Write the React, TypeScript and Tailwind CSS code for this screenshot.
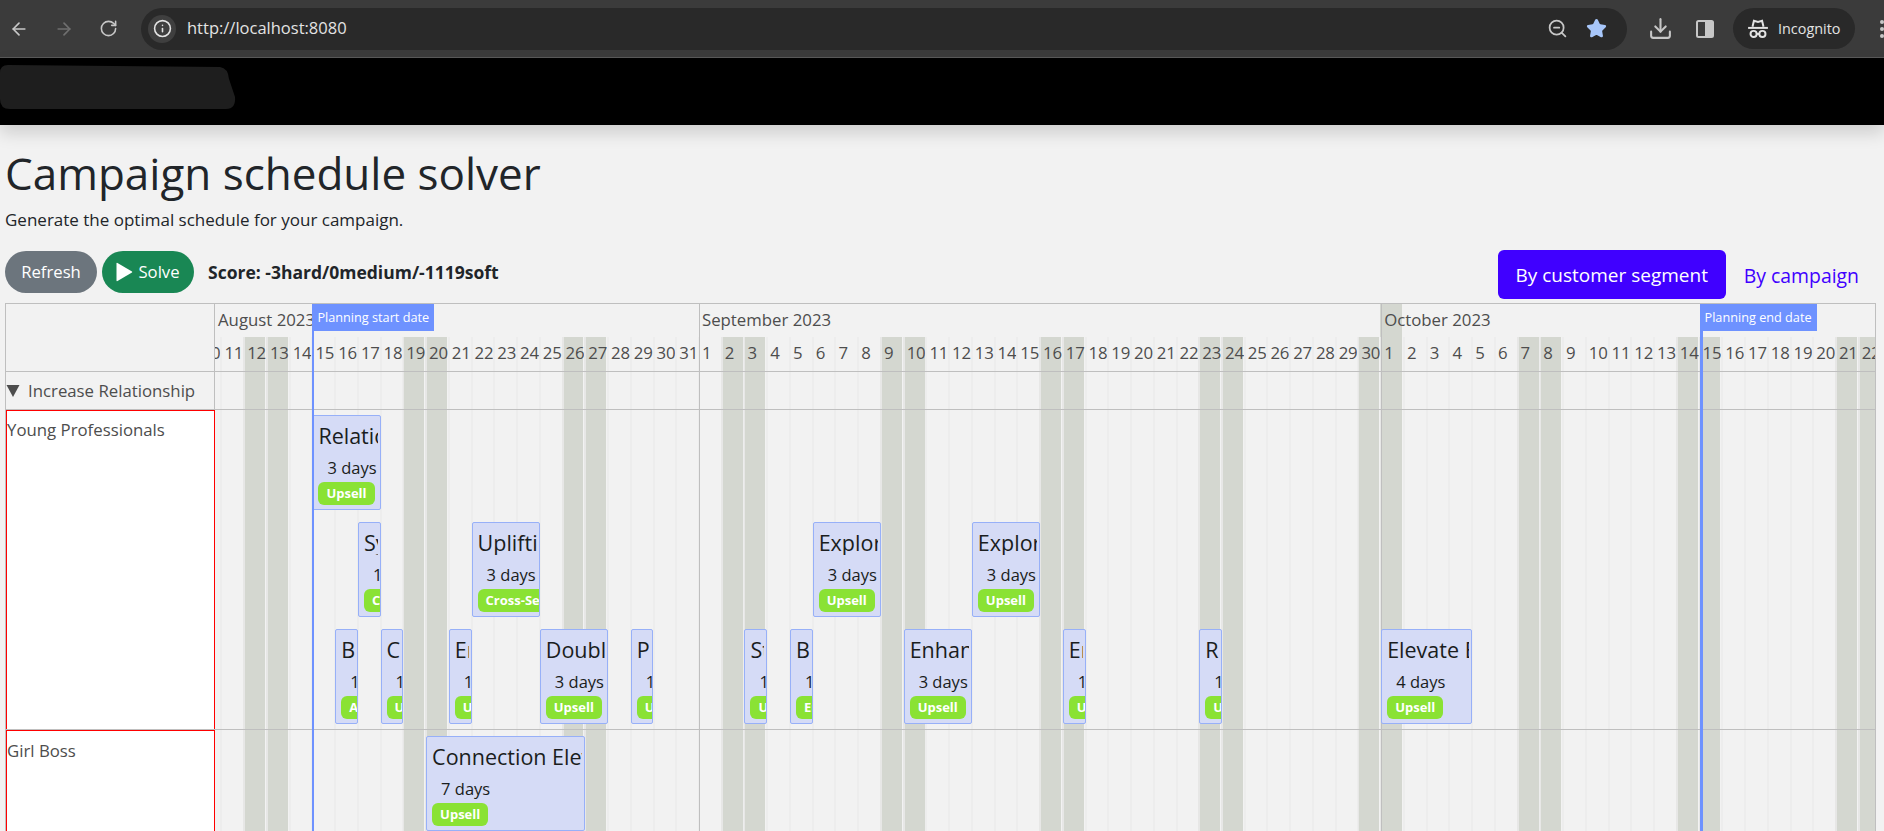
import React from 'react';
import { ArrowLeft, ArrowRight, Download, Info, RotateCw, Star, ZoomOut } from 'lucide-react';

const DAY_WIDTH = 22.74;
// x of Aug 10 inside the timeline canvas
const ORIGIN = -16.3;

type Month = 'Aug' | 'Sep' | 'Oct';

const monthOffset: Record<Month, number> = { Aug: -10, Sep: 21, Oct: 51 };

function dayIndex(month: Month, day: number) {
  return monthOffset[month] + day;
}

function dayX(index: number) {
  return ORIGIN + index * DAY_WIDTH;
}

// Aug 10 to Oct 22
const days: number[] = [
  ...Array.from({ length: 22 }, (_, i) => 10 + i),
  ...Array.from({ length: 30 }, (_, i) => 1 + i),
  ...Array.from({ length: 22 }, (_, i) => 1 + i),
];

interface Campaign {
  title: string;
  month: Month;
  day: number;
  length: number;
  tag: string;
  lane: number;
}

const youngProfessionals: Campaign[] = [
  { title: 'Relationship', month: 'Aug', day: 15, length: 3, tag: 'Upsell', lane: 0 },
  { title: 'Synergy', month: 'Aug', day: 17, length: 1, tag: 'Cross-Sell', lane: 1 },
  { title: 'Uplifting', month: 'Aug', day: 22, length: 3, tag: 'Cross-Sell', lane: 1 },
  { title: 'Explore', month: 'Sep', day: 6, length: 3, tag: 'Upsell', lane: 1 },
  { title: 'Explore', month: 'Sep', day: 13, length: 3, tag: 'Upsell', lane: 1 },
  { title: 'Boost', month: 'Aug', day: 16, length: 1, tag: 'Add-on', lane: 2 },
  { title: 'Connect', month: 'Aug', day: 18, length: 1, tag: 'Upsell', lane: 2 },
  { title: 'Engage', month: 'Aug', day: 21, length: 1, tag: 'Upsell', lane: 2 },
  { title: 'Double', month: 'Aug', day: 25, length: 3, tag: 'Upsell', lane: 2 },
  { title: 'Personal', month: 'Aug', day: 29, length: 1, tag: 'Upsell', lane: 2 },
  { title: 'Strengthen', month: 'Sep', day: 3, length: 1, tag: 'Upsell', lane: 2 },
  { title: 'Build', month: 'Sep', day: 5, length: 1, tag: 'Engage', lane: 2 },
  { title: 'Enhance', month: 'Sep', day: 10, length: 3, tag: 'Upsell', lane: 2 },
  { title: 'Engage', month: 'Sep', day: 17, length: 1, tag: 'Upsell', lane: 2 },
  { title: 'Reinforce', month: 'Sep', day: 23, length: 1, tag: 'Upsell', lane: 2 },
  { title: 'Elevate Bond', month: 'Oct', day: 1, length: 4, tag: 'Upsell', lane: 2 },
];

const girlBoss: Campaign[] = [
  { title: 'Connection Elevate', month: 'Aug', day: 20, length: 7, tag: 'Upsell', lane: 0 },
];

function CampaignItem({ item, top }: { item: Campaign; top: number }) {
  const index = dayIndex(item.month, item.day);
  return (
    <div
      className="absolute h-[95px] overflow-hidden rounded-[2px] border border-[#97b0f8] bg-[#d5dbf6] pl-[5px] pt-[8px] whitespace-nowrap text-[#1a1d20]"
      style={{ left: dayX(index), width: item.length * DAY_WIDTH, top }}
    >
      <div className="mr-[2px] h-[24px] overflow-hidden text-[21.5px] leading-[24px] font-medium">{item.title}</div>
      <div className="mt-[8px] h-[24px] pl-[9px] text-[16.5px] leading-[24px]">
        {item.length} {item.length === 1 ? 'day' : 'days'}
      </div>
      <span className="mt-0 inline-block h-[23px] rounded-[6px] bg-[#8ae234] px-[8px] text-[13px] leading-[23px] font-bold text-white">
        {item.tag}
      </span>
    </div>
  );
}

function TimelineBackground() {
  return (
    <div className="absolute top-0 right-0 bottom-0 left-[209px] overflow-hidden">
      {days.map((day, i) => {
        const weekend = (i + 5) % 7 === 0 || (i + 4) % 7 === 0;
        return (
          <React.Fragment key={i}>
            {weekend && (
              <div
                className={`absolute bottom-0 w-[21.7px] bg-[#d4d7d0] ${i === 52 ? 'top-0' : 'top-[33px]'}`}
                style={{ left: dayX(i) - 0.8 }}
              />
            )}
            <div
              className="absolute top-[33px] bottom-0 w-[2px] bg-[#ebebeb] opacity-80"
              style={{ left: dayX(i) - 1 }}
            />
            <div
              className="absolute top-[37px] text-[16.8px] leading-[24px] tracking-[-0.2px] text-[#4d4d4d]"
              style={{ left: dayX(i) + 3 }}
            >
              {day}
            </div>
          </React.Fragment>
        );
      })}
      {[
        { label: 'August 2023', x: 3 },
        { label: 'September 2023', x: dayX(22) + 3 },
        { label: 'October 2023', x: dayX(52) + 3 },
      ].map((m) => (
        <div
          key={m.label}
          className="absolute top-[4px] text-[16.8px] leading-[24px] whitespace-nowrap text-[#4d4d4d]"
          style={{ left: m.x }}
        >
          {m.label}
        </div>
      ))}
      {[22, 52].map((i) => (
        <div key={i} className="absolute top-0 bottom-0 w-px bg-[#bfbfbf]" style={{ left: dayX(i) }} />
      ))}
    </div>
  );
}

function PlanningMarker({ label, index, lineClass }: { label: string; index: number; lineClass: string }) {
  return (
    <div className="absolute top-0 bottom-0 z-20" style={{ left: 209 + dayX(index) }}>
      <div className={`absolute top-0 bottom-0 left-0 bg-[#6e92ff] ${lineClass}`} />
      <div className="absolute top-0 left-0 flex h-[27px] items-center bg-[#6e92ff] px-[5px] text-[12.7px] whitespace-nowrap text-white">
        {label}
      </div>
    </div>
  );
}

function Timeline() {
  return (
    <div className="relative ml-[5px] h-[540px] w-[1871px] overflow-hidden border border-[#bfbfbf] text-[#4d4d4d]">
      <TimelineBackground />
      <div className="relative z-10 flex h-[68px] border-b border-[#bfbfbf]">
        <div className="w-[209px] border-r border-[#bfbfbf]" />
      </div>
      <div className="relative z-10 flex h-[38px] border-b border-[#bfbfbf]">
        <div className="flex w-[209px] items-center gap-[8px] border-r border-[#bfbfbf] text-[16.8px]">
          <svg width="14" height="14" viewBox="0 0 14 14" className="shrink-0">
            <path d="M0.5 1H13.5L7 13Z" fill="#4d4d4d" />
          </svg>
          <span>Increase Relationship</span>
        </div>
      </div>
      <div className="relative z-10 flex h-[320px] border-b border-[#bfbfbf]">
        <div className="w-[209px] border border-b-0 border-[#ff0000] bg-white pt-[7px] text-[16.8px] leading-[24px]">
          Young Professionals
        </div>
        <div className="relative flex-1 overflow-hidden">
          {youngProfessionals.map((item) => (
            <CampaignItem key={item.title + item.day} item={item} top={5 + item.lane * 107} />
          ))}
        </div>
      </div>
      <div className="relative z-10 flex h-[200px]">
        <div className="w-[209px] border border-[#ff0000] bg-white pt-[8px] text-[16.8px] leading-[24px]">Girl Boss</div>
        <div className="relative flex-1 overflow-hidden">
          {girlBoss.map((item) => (
            <CampaignItem key={item.title} item={item} top={6} />
          ))}
        </div>
      </div>
      <PlanningMarker label="Planning start date" index={5} lineClass="w-[2px]" />
      <PlanningMarker label="Planning end date" index={66} lineClass="w-[3px]" />
    </div>
  );
}

function BrowserBar() {
  return (
    <div className="flex h-[58px] items-center border-b border-[#5a5a5a] bg-[#3b3b3b] text-[#c7c7c7]">
      <div className="ml-[9px] flex w-[120px] items-center gap-[25px]">
        <ArrowLeft size={20} />
        <ArrowRight size={20} className="text-[#6f6f6f]" />
        <RotateCw size={19} />
      </div>
      <div className="ml-[12px] flex h-[42px] w-[1486px] items-center rounded-full bg-[#292929] pl-[7px] pr-[20px]">
        <div className="flex h-[28px] w-[28px] items-center justify-center rounded-full bg-[#3f3f3f] text-[#e3e3e3]">
          <Info size={19} />
        </div>
        <span className="ml-[11px] flex-1 text-[16.5px] text-[#e3e3e3]">http://localhost:8080</span>
        <ZoomOut size={21} />
        <Star size={21} className="ml-[18px] fill-[#a8c7fa] text-[#a8c7fa]" />
      </div>
      <Download size={25} className="ml-[21px]" />
      <svg width="18" height="18" viewBox="0 0 18 18" className="ml-[23px]">
        <rect x="1" y="1" width="16" height="16" rx="1.5" fill="none" stroke="#c7c7c7" strokeWidth="2" />
        <rect x="9" y="1" width="8" height="16" fill="#c7c7c7" />
      </svg>
      <div className="ml-[19px] flex h-[41px] w-[122px] items-center rounded-full bg-[#292929] pl-[14px] text-[#e3e3e3]">
        <svg width="22" height="22" viewBox="0 0 20 20" fill="none" stroke="currentColor" strokeWidth="1.8">
          <path d="M5 8L6.3 2.5L10 3.5L13.7 2.5L15 8" />
          <path d="M1 9H19" />
          <circle cx="6" cy="14.5" r="2.8" />
          <circle cx="14" cy="14.5" r="2.8" />
          <path d="M8.8 14.5H11.2" />
        </svg>
        <span className="ml-[9px] text-[14.4px]">Incognito</span>
      </div>
      <div className="ml-[25px] flex flex-col gap-[3px]">
        <span className="h-[4px] w-[4px] rounded-full bg-[#c7c7c7]" />
        <span className="h-[4px] w-[4px] rounded-full bg-[#c7c7c7]" />
        <span className="h-[4px] w-[4px] rounded-full bg-[#c7c7c7]" />
      </div>
    </div>
  );
}

export default function App() {
  return (
    <div className="h-[831px] w-[1884px] overflow-hidden bg-[#f2f2f2] font-['Open_Sans',sans-serif] text-[#212529]">
      <BrowserBar />
      <div className="relative z-10 h-[67px] bg-black pt-[7px] shadow-[0_8px_16px_rgba(0,0,0,0.15)]">
        <svg width="236" height="45" viewBox="0 0 236 45">
          <path d="M0 8Q0 0 8 0L220 2Q228 3 229 14L235 32Q236 44 226 44L10 44Q0 44 0 34Z" fill="#1e1e1e" />
        </svg>
      </div>
      <div className="px-[5px] pt-[24px]">
        <h1 className="text-[44px] leading-[48px] font-medium">Campaign schedule solver</h1>
        <p className="mt-[11px] text-[17px] leading-[24px]">Generate the optimal schedule for your campaign.</p>
        <div className="mt-[18px] flex h-[53px] items-start justify-between pr-[20px]">
          <div className="mt-px flex items-center">
            <button className="h-[42px] w-[92px] rounded-full bg-[#6c757d] text-[16.7px] text-white">Refresh</button>
            <button className="ml-[5px] flex h-[42px] w-[92px] items-center justify-center gap-[5px] rounded-full bg-[#198754] text-[16.7px] text-white">
              <svg width="17" height="20" viewBox="0 0 17 20">
                <path d="M1.5 1L16 9.5Q16.5 10 16 10.5L1.5 19Q0.5 19.5 0.5 18.5V1.5Q0.5 0.5 1.5 1Z" fill="white" />
              </svg>
              Solve
            </button>
            <b className="ml-[14px] text-[17.5px] font-bold">Score: -3hard/0medium/-1119soft</b>
          </div>
          <div className="flex items-center">
            <button className="h-[49px] w-[228px] rounded-[6px] bg-[#4000ff] pt-[2px] text-[19px] text-white">By customer segment</button>
            <span className="ml-[18px] pt-[2px] text-[19.4px] text-[#4000ff]">By campaign</span>
          </div>
        </div>
      </div>
      <Timeline />
    </div>
  );
}
